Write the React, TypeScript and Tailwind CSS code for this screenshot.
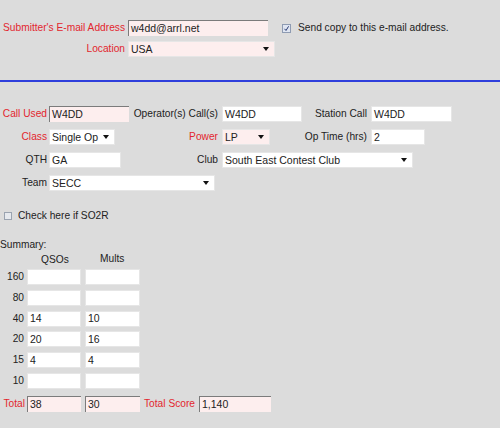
import { ReactNode } from "react";

const font = { fontFamily: '"Liberation Sans", Arial, sans-serif' };

const Arrow = () => (
  <svg width="6" height="4" viewBox="0 0 6 4" className="shrink-0">
    <path d="M0 0 H6 L3 4 Z" fill="#111" />
  </svg>
);

interface FieldProps {
  value?: string;
  width: string;
  pink?: boolean;
  inset?: boolean;
  select?: boolean;
}

const Field = ({ value = "", width, pink, inset, select }: FieldProps) => {
  const bg = pink ? "bg-[#fdeeee]" : "bg-white";
  const border = inset
    ? "border-t border-l border-[#7b7b7b]"
    : "border border-[#e6e6e6]";
  return (
    <div
      className={`${width} ${bg} ${border} h-[16px] shrink-0 flex items-center justify-between pl-[2px] pr-[5px] text-[10.5px] leading-none text-[#222] overflow-hidden whitespace-nowrap`}
    >
      <span>{value}</span>
      {select && <Arrow />}
    </div>
  );
};

const Label = ({ children, red }: { children: ReactNode; red?: boolean }) => (
  <span
    className={`text-[10.2px] leading-[16px] whitespace-nowrap ${red ? "text-[#e3262e]" : "text-[#222]"}`}
  >
    {children}
  </span>
);

const Cell = ({ children, pr = "pr-[2px]" }: { children: ReactNode; pr?: string }) => (
  <div className={`h-[16px] flex items-center justify-end ${pr}`}>{children}</div>
);

const bands = [
  { band: "160", qsos: "", mults: "" },
  { band: "80", qsos: "", mults: "" },
  { band: "40", qsos: "14", mults: "10" },
  { band: "20", qsos: "20", mults: "16" },
  { band: "15", qsos: "4", mults: "4" },
  { band: "10", qsos: "", mults: "" },
];

export default function App() {
  return (
    <div className="w-[500px] h-[428px] bg-[#dcdcdc] overflow-hidden leading-[16px]" style={font}>
      {/* submitter */}
      <div className="pt-[20px] flex flex-col gap-[5px]">
        <div className="flex items-center h-[16px]">
          <div className="w-[128px] pr-[3px] flex justify-end">
            <Label red>Submitter's E-mail Address</Label>
          </div>
          <Field value="w4dd@arrl.net" width="w-[140px]" pink inset />
          <div className="ml-[14px] flex items-center gap-[7px]">
            <span className="w-[9px] h-[9px] border border-[#8e9bb2] bg-[#dfe5f1] flex items-center justify-center">
              <svg width="7" height="7" viewBox="0 0 7 7">
                <path d="M1.5 3.8 L3 5.5 L5.6 1.3" stroke="#2a3b73" strokeWidth="1" fill="none" />
              </svg>
            </span>
            <Label>Send copy to this e-mail address.</Label>
          </div>
        </div>
        <div className="flex items-center h-[16px]">
          <div className="w-[128px] pr-[3px] flex justify-end">
            <Label red>Location</Label>
          </div>
          <Field value="USA" width="w-[147px]" pink select />
        </div>
      </div>

      <div className="mt-[23px] h-[2px] bg-[#2f3fdc]" />

      {/* entry details */}
      <div className="mt-[24px] grid grid-cols-[49px_85px_88px_85px_64px_auto] gap-y-[7px] items-center">
        <Cell><Label red>Call Used</Label></Cell>
        <Field value="W4DD" width="w-[80px]" pink inset />
        <Cell pr="pr-[4px]"><Label>Operator(s) Call(s)</Label></Cell>
        <Field value="W4DD" width="w-[80px]" />
        <Cell pr="pr-[4px]"><Label>Station Call</Label></Cell>
        <Field value="W4DD" width="w-[81px]" />

        <Cell><Label red>Class</Label></Cell>
        <Field value="Single Op" width="w-[66px]" select />
        <Cell pr="pr-[4px]"><Label red>Power</Label></Cell>
        <Field value="LP" width="w-[48px]" pink select />
        <Cell pr="pr-[4px]"><Label>Op Time (hrs)</Label></Cell>
        <Field value="2" width="w-[54px]" />

        <Cell><Label>QTH</Label></Cell>
        <Field value="GA" width="w-[72px]" />
        <Cell pr="pr-[4px]"><Label>Club</Label></Cell>
        <div className="col-span-3">
          <Field value="South East Contest Club" width="w-[191px]" select />
        </div>

        <Cell><Label>Team</Label></Cell>
        <div className="col-span-2">
          <Field value="SECC" width="w-[166px]" select />
        </div>
      </div>

      {/* SO2R */}
      <div className="mt-[17px] ml-[4px] h-[16px] flex items-center gap-[6px]">
        <span className="w-[8px] h-[8px] border border-[#9aa3b0] bg-[#e6e9ee]" />
        <Label>Check here if SO2R</Label>
      </div>

      {/* summary */}
      <div className="mt-[14px] h-[14px] flex items-center">
        <Label>Summary:</Label>
      </div>
      <div className="h-[14px] flex items-center">
        <div className="w-[41px]" />
        <div className="w-[59px]"><Label>QSOs</Label></div>
        <Label>Mults</Label>
      </div>
      <div className="mt-[3px] flex flex-col gap-[4.8px]">
        {bands.map((b) => (
          <div key={b.band} className="flex items-center h-[16px]">
            <div className="w-[27px] pr-[3px] flex justify-end">
              <Label>{b.band}</Label>
            </div>
            <Field value={b.qsos} width="w-[54px]" />
            <div className="w-[4px]" />
            <Field value={b.mults} width="w-[55px]" />
          </div>
        ))}
        <div className="mt-[2px] flex items-center h-[16px]">
          <div className="w-[27px] pr-[2px] flex justify-end">
            <Label red>Total</Label>
          </div>
          <Field value="38" width="w-[54px]" pink inset />
          <div className="w-[4px]" />
          <Field value="30" width="w-[55px]" pink inset />
          <div className="w-[59px] pr-[4px] flex justify-end">
            <Label red>Total Score</Label>
          </div>
          <Field value="1,140" width="w-[72px]" pink inset />
        </div>
      </div>
    </div>
  );
}
